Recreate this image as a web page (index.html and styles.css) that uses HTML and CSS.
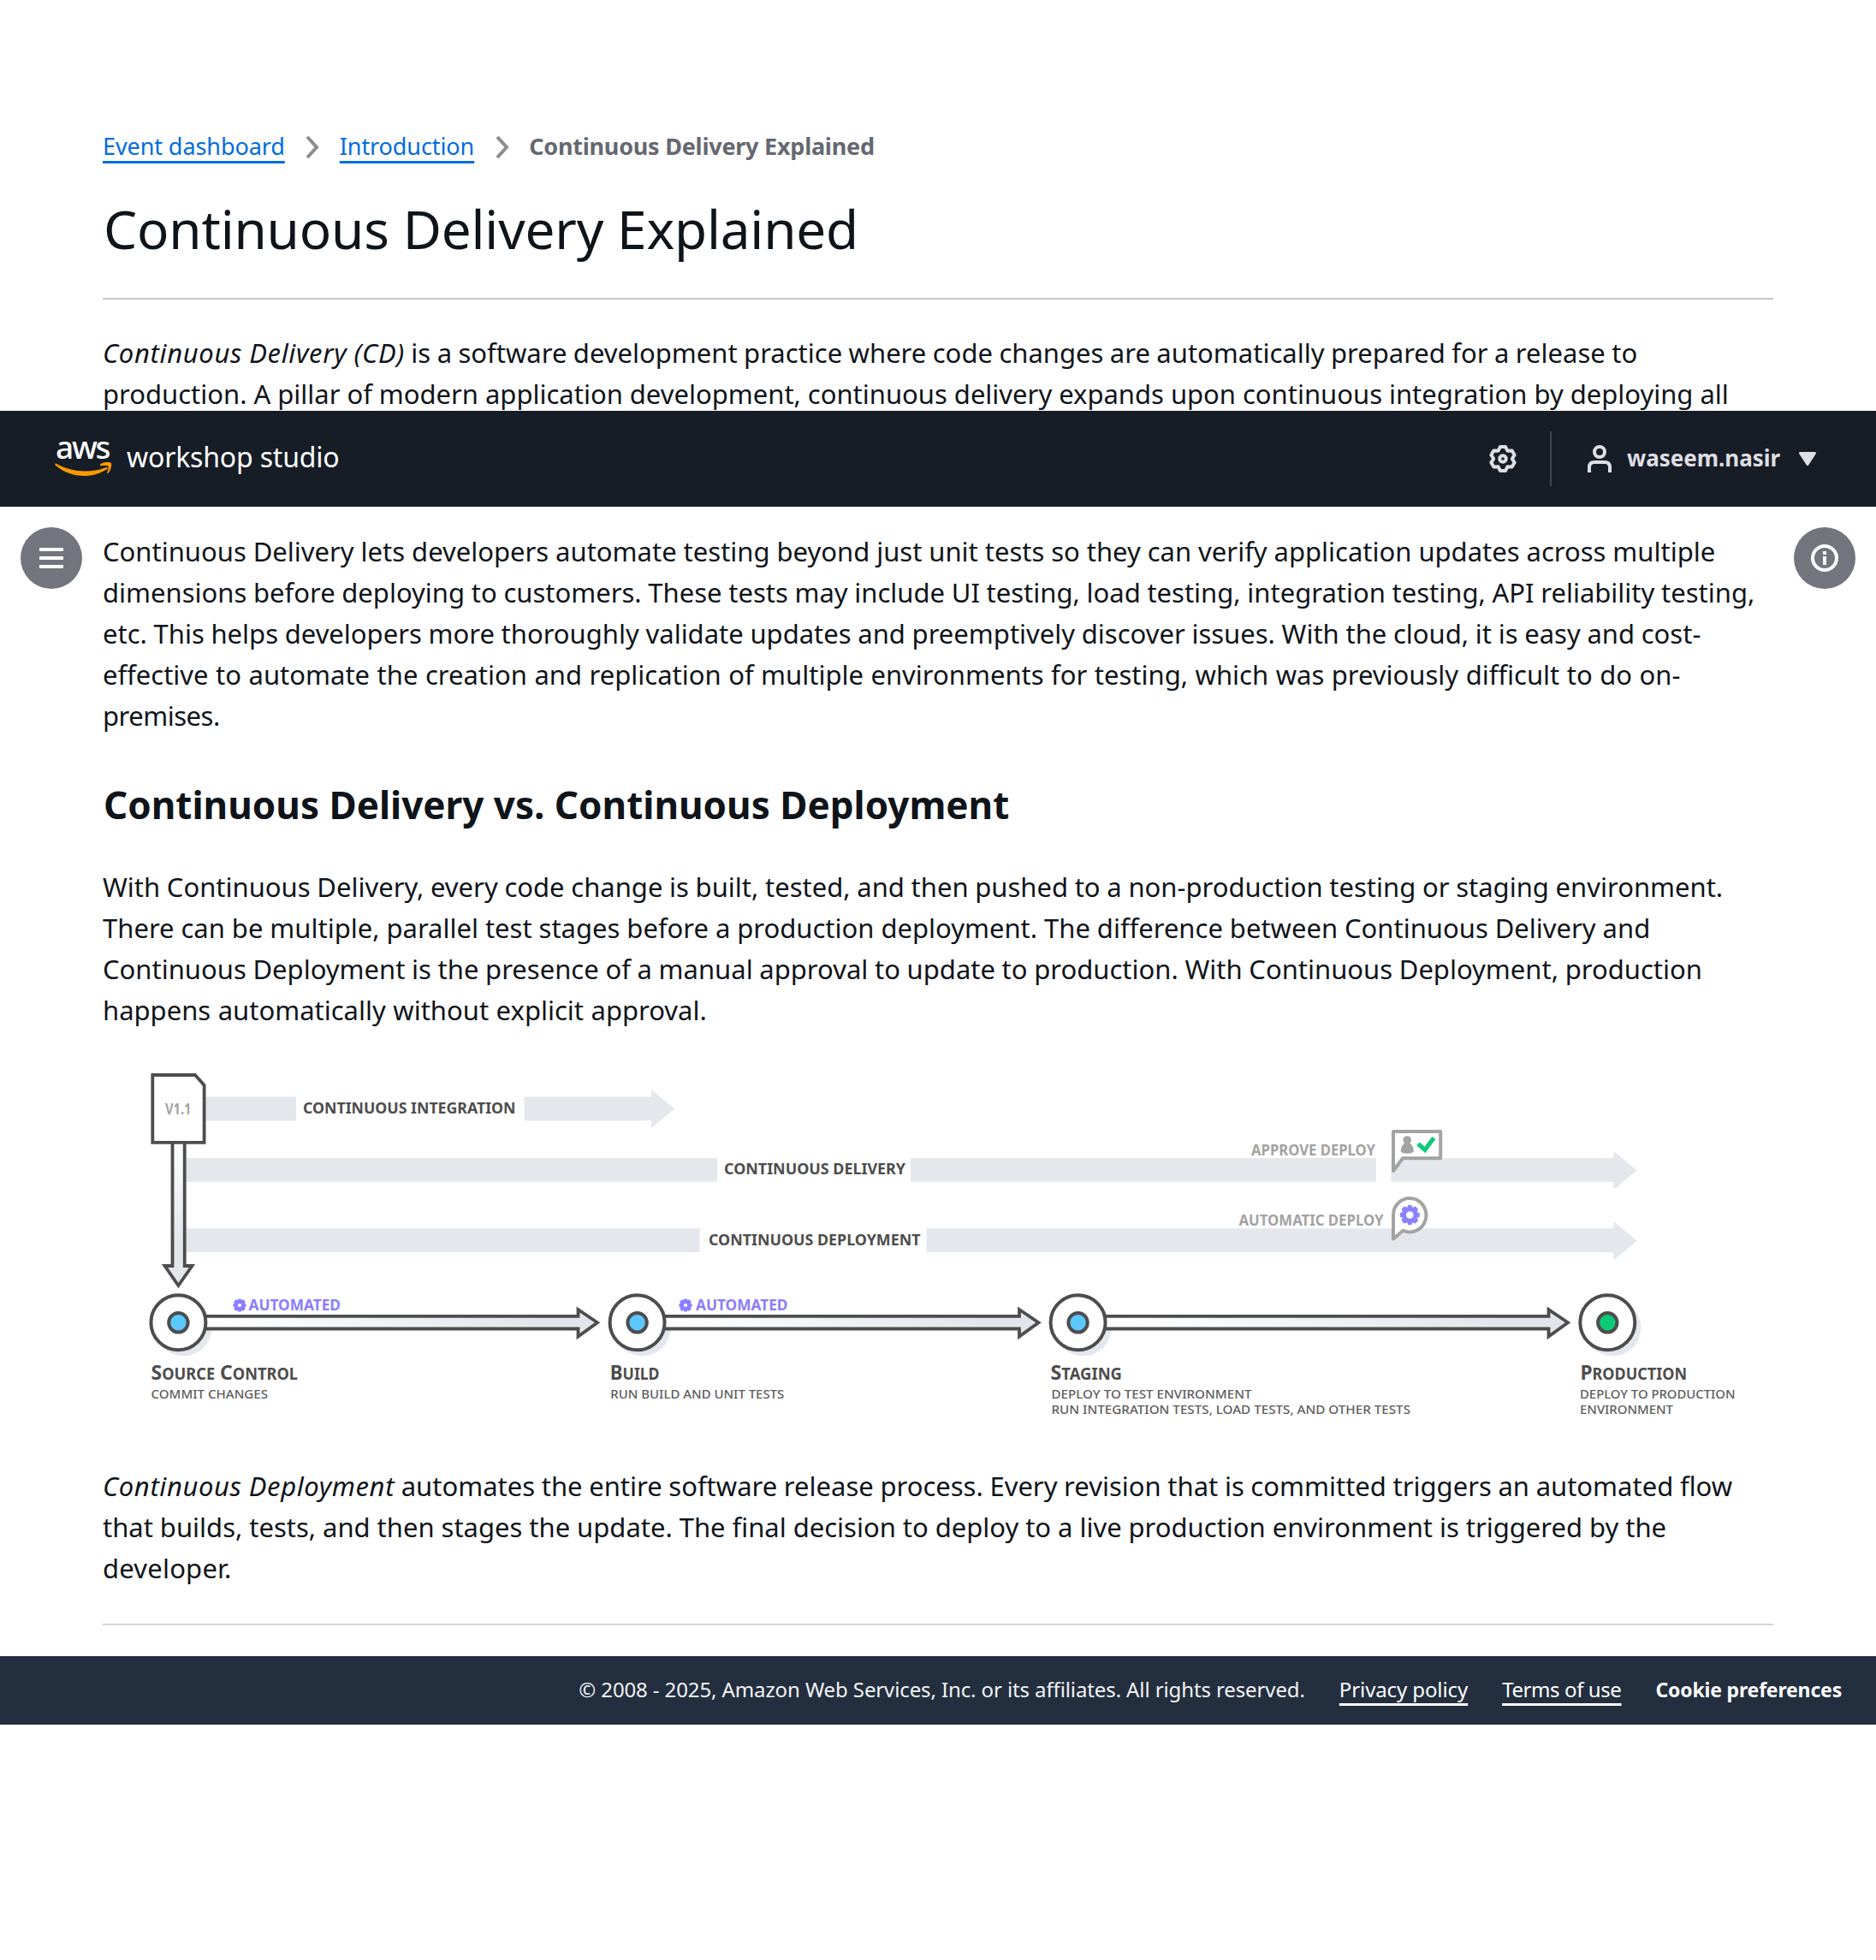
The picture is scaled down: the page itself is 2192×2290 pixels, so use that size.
FILE: index.html
```html
<!DOCTYPE html>
<html lang="en">
<head>
<meta charset="utf-8">
<title>Continuous Delivery Explained</title>
<link rel="stylesheet" href="styles.css">
</head>
<body>
<div class="page-top">
  <nav class="breadcrumbs">
    <a class="crumb crumb-dash">Event dashboard</a>
    <svg class="chevron" width="16" height="28" viewBox="0 0 16 28"><path d="M2 2 L13 14 L2 26"/></svg>
    <a class="crumb">Introduction</a>
    <svg class="chevron" width="16" height="28" viewBox="0 0 16 28"><path d="M2 2 L13 14 L2 26"/></svg>
    <span class="crumb-current">Continuous Delivery Explained</span>
  </nav>
  <h1>Continuous Delivery Explained</h1>
  <p class="intro"><span class="line l-intro"><em>Continuous Delivery (CD)</em> is a software development practice where code changes are automatically prepared for a release to</span>
  <span class="line snug">production. A pillar of modern application development, continuous delivery expands upon continuous integration by deploying all</span></p>
</div>

<header class="topbar">
  <div class="brand">
    <div class="aws">
      <span class="aws-word">aws</span>
      <svg class="smile" width="68" height="18" viewBox="0 0 68 18">
        <path d="M1.500 1.600 C20 12.500 42 12.800 59.500 6.200 C61.500 5.400 62.500 7 60.800 8.200 C44 19.500 18 19 .7 3.600 C-.2 2.600 .5 1 1.500 1.600Z"/>
        <path d="M53.500 2.300 C57 -.5 65 -.3 66 1.200 C67 2.800 65.500 9.600 62.400 12.800 C61.700 13.400 60.800 13 61.200 12 C62.200 9.700 63.200 5.700 62.400 4.700 C61.500 3.700 57.500 4 54 4.300 C52.700 4.300 52.600 3 53.500 2.300Z"/>
      </svg>
    </div>
    <span class="product">workshop studio</span>
  </div>
  <div class="tools">
    <svg class="icon" width="34" height="34" viewBox="-17 -17 34 34"><path d="M-3-14 H3 L5.400-9.300 L10.600-9.600 L13.600-4.400 L10.800 0 L13.600 4.400 L10.600 9.600 L5.400 9.300 L3 14 H-3 L-5.400 9.300 L-10.600 9.600 L-13.600 4.400 L-10.800 0 L-13.600-4.400 L-10.600-9.600 L-5.400-9.300Z"/><circle r="3.800"/></svg>
    <span class="tool-divider"></span>
    <svg class="icon user" width="30" height="32" viewBox="0 0 30 32"><circle cx="15" cy="8" r="6"/><path d="M3 32 V26 Q3 20 9 20 H21 Q27 20 27 26 V32"/></svg>
    <span class="user-name">waseem.nasir</span>
    <svg class="caret" width="20" height="16" viewBox="0 0 20 16"><path d="M1.500 1.500 H18.500 L10 14.500Z"/></svg>
  </div>
</header>

<main class="body-grid">
  <div class="rail">
    <button class="round" aria-label="Menu"><svg width="28" height="24" viewBox="0 0 28 24"><path d="M0 2H28M0 12H28M0 22H28" stroke="#fff" stroke-width="4"/></svg></button>
  </div>
  <article>
    <p>
      <span class="line snug">Continuous Delivery lets developers automate testing beyond just unit tests so they can verify application updates across multiple</span>
      <span class="line tight">dimensions before deploying to customers. These tests may include UI testing, load testing, integration testing, API reliability testing,</span>
      <span class="line tight">etc. This helps developers more thoroughly validate updates and preemptively discover issues. With the cloud, it is easy and cost-</span>
      <span class="line loose">effective to automate the creation and replication of multiple environments for testing, which was previously difficult to do on-</span>
      <span class="line short">premises.</span>
    </p>
    <h2>Continuous Delivery vs. Continuous Deployment</h2>
    <p>
      <span class="line tight">With Continuous Delivery, every code change is built, tested, and then pushed to a non-production testing or staging environment.</span>
      <span class="line snug">There can be multiple, parallel test stages before a production deployment. The difference between Continuous Delivery and</span>
      <span class="line tight">Continuous Deployment is the presence of a manual approval to update to production. With Continuous Deployment, production</span>
      <span class="line loose">happens automatically without explicit approval.</span>
    </p>
    <svg class="diagram" width="1952" height="428" viewBox="120 1244 1952 428">
      <defs>
        <linearGradient id="down" x1="0" y1="0" x2="0" y2="1"><stop offset="0" stop-color="#fff"/><stop offset=".7" stop-color="#e4e7ec"/></linearGradient>
        <linearGradient id="across"><stop offset="0" stop-color="#fff"/><stop offset=".85" stop-color="#e2e6ec"/></linearGradient>
        <path id="cog" fill-rule="evenodd" d="M-2.200-11.500H2.200L3-8.700L6.500-10L9.800-6.800L8.500-3.200L11.500-2.200V2.200L8.500 3.200L9.800 6.800L6.500 10L3 8.700L2.200 11.500H-2.200L-3 8.700L-6.500 10L-9.800 6.800L-8.500 3.200L-11.500 2.200V-2.200L-8.500-3.200L-9.800-6.800L-6.500-10L-3-8.700ZM0-4.300A4.300 4.300 0 1 0 0 4.300A4.300 4.300 0 1 0 0-4.300Z"/>
        <path id="cog-small" fill-rule="evenodd" d="M-1.600-7.600H1.600L2.100-5.900L4.300-6.700L6.700-4.300L5.900-2.100L7.600-1.600V1.600L5.900 2.100L6.700 4.300L4.300 6.700L2.100 5.900L1.600 7.600H-1.600L-2.100 5.900L-4.300 6.700L-6.700 4.300L-5.900 2.100L-7.600 1.600V-1.600L-5.900-2.100L-6.700-4.300L-4.300-6.700L-2.100-5.900ZM0-2.100A2.100 2.100 0 1 0 0 2.100A2.100 2.100 0 1 0 0-2.100Z"/>
      </defs>
      <g class="lane">
        <path d="M240 1281.500H346V1309.300H240ZM612.500 1281.500H761V1273L788 1295.500L761 1318V1309.300H612.500Z"/>
        <path d="M217 1353H838V1380.700H217ZM1064 1353H1608V1380.700H1064ZM1625.500 1353H1885.500V1345L1912.500 1367.500L1885.500 1390V1380.700H1625.500Z"/>
        <path d="M217 1435.300H817.500V1463H217ZM1082.500 1435.300H1885.500V1427L1912.500 1449.700L1885.500 1472.500V1463H1082.500Z"/>
      </g>
      <g class="shadow"><circle cx="214.400" cy="1551.300" r="33"/><circle cx="750.600" cy="1551.300" r="33"/><circle cx="1265.600" cy="1551.300" r="33"/><circle cx="1884.300" cy="1551.300" r="33"/></g>
      <path class="ink" fill="url(#down)" d="M201.500 1330V1479H192.500L208.400 1502L224.500 1479H215.700V1330Z"/>
      <path class="ink" fill="#fff" d="M178.300 1256H228L238.600 1268V1334.800H178.300Z"/>
      <path class="ink" fill="url(#across)" d="M236 1537.800H675.500V1530L698 1545.300L675.500 1561.500V1552.500H236Z"/>
      <path class="ink" fill="url(#across)" d="M772 1537.800H1191V1530L1213.500 1545.300L1191 1561.500V1552.500H772Z"/>
      <path class="ink" fill="url(#across)" d="M1287 1537.800H1809.500V1530L1832 1545.300L1809.500 1561.500V1552.500H1287Z"/>
      <g class="ring"><circle cx="208.400" cy="1545.300" r="32"/><circle cx="744.600" cy="1545.300" r="32"/><circle cx="1259.600" cy="1545.300" r="32"/><circle cx="1878.300" cy="1545.300" r="32"/></g>
      <g class="dot"><circle cx="208.400" cy="1545.300" r="11.200"/><circle cx="744.600" cy="1545.300" r="11.200"/><circle cx="1259.600" cy="1545.300" r="11.200"/><circle class="live" cx="1878.300" cy="1545.300" r="11.200"/></g>

      <path class="bubble" d="M1628 1322H1683.200V1353.200H1639L1628 1368Z"/>
      <circle cx="1644.200" cy="1332" r="4.800" fill="#a3a3a3"/>
      <path fill="#a3a3a3" d="M1641.500 1335H1647C1650 1338 1651.800 1341 1651.800 1344.500C1651.800 1347 1649 1347.700 1644.200 1347.700S1636.700 1347 1636.700 1344.500C1636.700 1341 1638.500 1338 1641.500 1335Z"/>
      <path d="M1657 1336.500L1665 1343.500L1675.300 1329.500" fill="none" stroke="#0dca78" stroke-width="5"/>
      <path class="bubble" d="M1628 1447.500V1420A19.200 19.700 0 1 1 1639.500 1437.800Z"/>
      <use href="#cog" x="1647.300" y="1419.500" fill="#8c82ff"/>
      <use href="#cog-small" x="280" y="1525" fill="#8c7cff"/>
      <use href="#cog-small" x="801" y="1525" fill="#8c7cff"/>

      <g class="label muted">
        <text x="193" y="1302" font-size="17" textLength="30.500" lengthAdjust="spacingAndGlyphs">V1.1</text>
        <text x="1462" y="1349.500" font-size="17" textLength="145" lengthAdjust="spacingAndGlyphs">APPROVE DEPLOY</text>
        <text x="1447.500" y="1432" font-size="17" textLength="169" lengthAdjust="spacingAndGlyphs">AUTOMATIC DEPLOY</text>
      </g>
      <g class="label">
        <text x="354" y="1301.300" font-size="18" textLength="248.500" lengthAdjust="spacingAndGlyphs">CONTINUOUS INTEGRATION</text>
        <text x="846" y="1372" font-size="18" textLength="212" lengthAdjust="spacingAndGlyphs">CONTINUOUS DELIVERY</text>
        <text x="828" y="1455" font-size="18" textLength="247.500" lengthAdjust="spacingAndGlyphs">CONTINUOUS DEPLOYMENT</text>
      </g>
      <g class="label auto">
        <text x="290.500" y="1531.300" font-size="17" textLength="107.500" lengthAdjust="spacingAndGlyphs">AUTOMATED</text>
        <text x="813" y="1531.300" font-size="17" textLength="107.500" lengthAdjust="spacingAndGlyphs">AUTOMATED</text>
      </g>
      <g class="label name">
        <text x="176.500" y="1612" textLength="171.500" lengthAdjust="spacingAndGlyphs">S<tspan class="sc">OURCE</tspan> C<tspan class="sc">ONTROL</tspan></text>
        <text x="712.800" y="1612" textLength="57.700" lengthAdjust="spacingAndGlyphs">B<tspan class="sc">UILD</tspan></text>
        <text x="1227.500" y="1612" textLength="83.500" lengthAdjust="spacingAndGlyphs">S<tspan class="sc">TAGING</tspan></text>
        <text x="1846.500" y="1612" textLength="124.500" lengthAdjust="spacingAndGlyphs">P<tspan class="sc">RODUCTION</tspan></text>
      </g>
      <g class="note">
        <text x="176.500" y="1633.500" textLength="136.500" lengthAdjust="spacingAndGlyphs">COMMIT CHANGES</text>
        <text x="713.300" y="1633.500" textLength="203" lengthAdjust="spacingAndGlyphs">RUN BUILD AND UNIT TESTS</text>
        <text x="1228.500" y="1633.500" textLength="234" lengthAdjust="spacingAndGlyphs">DEPLOY TO TEST ENVIRONMENT</text>
        <text x="1228.500" y="1651.700" textLength="419.500" lengthAdjust="spacingAndGlyphs">RUN INTEGRATION TESTS, LOAD TESTS, AND OTHER TESTS</text>
        <text x="1846" y="1633.500" textLength="181.500" lengthAdjust="spacingAndGlyphs">DEPLOY TO PRODUCTION</text>
        <text x="1846" y="1651.700" textLength="109" lengthAdjust="spacingAndGlyphs">ENVIRONMENT</text>
      </g>
    </svg>
    <p class="closing">
      <span class="line l-deploy"><em>Continuous Deployment</em> automates the entire software release process. Every revision that is committed triggers an automated flow</span>
      <span class="line snug">that builds, tests, and then stages the update. The final decision to deploy to a live production environment is triggered by the</span>
      <span class="line l-dev">developer.</span>
    </p>
  </article>
  <div class="rail">
    <button class="round" aria-label="Info"><svg width="32" height="32" viewBox="0 0 32 32"><circle cx="16" cy="16" r="14" fill="none" stroke="#fff" stroke-width="4"/><path d="M14 8H18V12H14ZM14 14H18V24H14Z" fill="#fff"/></svg></button>
  </div>
</main>

<footer>
  <span class="copyright">© 2008 - 2025, Amazon Web Services, Inc. or its affiliates. All rights reserved.</span>
  <a class="privacy">Privacy policy</a>
  <a class="terms">Terms of use</a>
  <b>Cookie preferences</b>
</footer>
</body>
</html>
```

FILE: styles.css
```css
* { box-sizing: border-box; }
body {
  margin: 0;
  background: #fff;
  color: #0f141a;
  font-family: "Noto Sans", "Open Sans", sans-serif;
  font-size: 31px;
  line-height: 48px;
}
h1, h2, p { margin: 0; }
.line { display: block; white-space: nowrap; }
.snug { word-spacing: -.12px; }
.tight { word-spacing: -.38px; }
.loose { word-spacing: .44px; }
.short { letter-spacing: -.5px; }

.page-top { padding: 150px 120px 0; height: 480px; overflow: hidden; }
.breadcrumbs { display: flex; align-items: center; height: 42px; font-size: 27px; }
.crumb {
  color: #006ce0;
  letter-spacing: -.09px;
  text-decoration: underline;
  text-decoration-thickness: 2.5px;
  text-underline-offset: 7px;
  text-decoration-skip-ink: none;
}
.chevron { flex: none; margin: 2px 23.500px 0 24.500px; fill: none; stroke: #8c8c94; stroke-width: 4; }
.crumb-current { color: #656871; font-weight: 700; letter-spacing: -.24px; }
h1 {
  height: 158px;
  padding: 35px 0 0 1px;
  border-bottom: 2px solid #c6c6cd;
  font-size: 62px;
  font-weight: 400;
  line-height: 80px;
  letter-spacing: -.18px;
  white-space: nowrap;
}
.intro { padding-top: 38px; }
.l-intro { word-spacing: -.6px; }
.l-intro em { letter-spacing: .65px; }

.topbar {
  display: flex;
  align-items: center;
  justify-content: space-between;
  height: 112px;
  padding: 0 70px 0 64px;
  background: #161d26;
}
.brand { display: flex; align-items: center; }
.aws { width: 68px; height: 58px; margin-right: 16px; display: flex; flex-direction: column; }
.aws-word { margin-left: 1px; height: 35px; color: #fff; font-size: 37px; font-weight: 500; line-height: 30px; letter-spacing: -2.2px; }
.smile { margin-top: -2px; fill: #f90; }
.product { color: #fff; font-size: 32px; letter-spacing: -.18px; padding-bottom: 5px; }
.tools { display: flex; align-items: center; color: #dedee3; }
.icon { fill: none; stroke: #dedee3; stroke-width: 4; stroke-linejoin: round; }
.tool-divider { width: 2px; height: 64px; margin: 0 41px 0 38px; background: #424650; }
.user-name { margin: 0 22px 3px 17px; font-size: 26px; font-weight: 700; letter-spacing: -.05px; }
.caret { fill: #dedee3; stroke: #dedee3; stroke-width: 3; stroke-linejoin: round; }

.body-grid { display: grid; grid-template-columns: 120px 1952px 120px; }
.rail { display: flex; justify-content: center; align-items: flex-start; padding-top: 24px; }
.round {
  display: flex;
  align-items: center;
  justify-content: center;
  width: 72px;
  height: 72px;
  padding: 0;
  border: 0;
  border-radius: 50%;
  background: #72747e;
}
article { padding-top: 28px; height: 1307px; border-bottom: 2px solid #d5d5da; }
h2 { margin: 52px 0 44px 1px; font-size: 44px; line-height: 56px; font-weight: 700; white-space: nowrap; }
.diagram { display: block; margin: 40px 0; }
.closing em { letter-spacing: .6px; }
.l-deploy { word-spacing: -.42px; }
.l-dev { letter-spacing: .2px; }

.diagram text { font-family: "Noto Sans", "Open Sans", sans-serif; }
.lane { fill: #e4e7ec; }
.ink { stroke: #4d4d4d; stroke-width: 3.8; }
.shadow { fill: #e4e7ed; }
.ring { fill: #fff; stroke: #4d4d4d; stroke-width: 4; }
.dot { fill: #5bc8ff; stroke: #4d4d4d; stroke-width: 4; }
.live { fill: #0dca78; }
.bubble { fill: #fff; stroke: #a3a3a3; stroke-width: 4; stroke-linejoin: round; }
.label { fill: #4d4d4d; font-weight: 700; }
.muted { fill: #a3a3a3; }
.auto { fill: #8c7cff; }
.name { font-size: 24px; }
.sc { font-size: 19px; }
.note { fill: #5c5c5c; font-size: 14px; font-weight: 500; }

footer {
  display: flex;
  align-items: center;
  justify-content: flex-end;
  gap: 40px;
  height: 80px;
  margin-top: 35.500px;
  padding: 0 40px 2px 0;
  background: #232f3e;
  color: #fff;
  font-size: 24px;
  white-space: nowrap;
}
.copyright { letter-spacing: -.11px; color: #f3f3f7; }
footer a { text-decoration: underline; text-decoration-thickness: 2.5px; text-underline-offset: 7px; text-decoration-skip-ink: none; }
.privacy { letter-spacing: -.1px; }
.terms { letter-spacing: -.4px; }
footer b { font-size: 23px; letter-spacing: -.18px; }
```
